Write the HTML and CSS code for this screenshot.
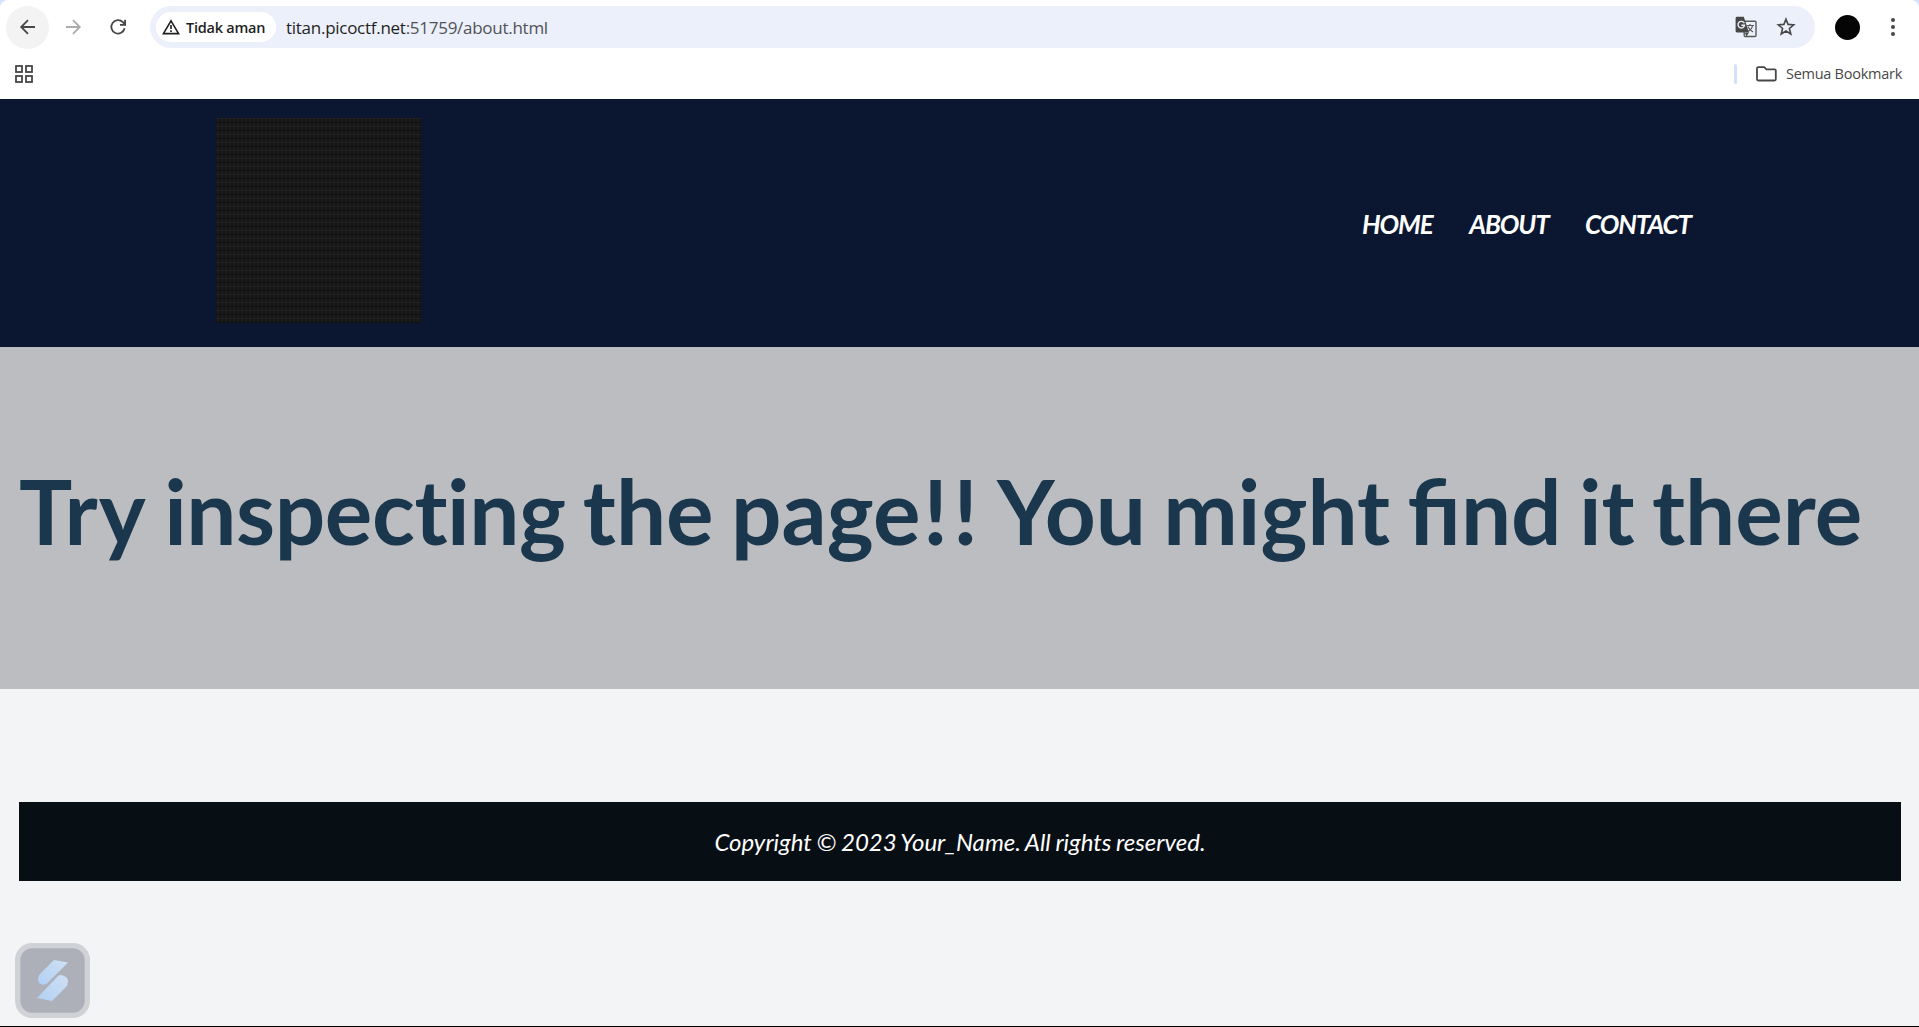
FILE: index.html
```html
<!DOCTYPE html>
<html lang="id">
<head>
<meta charset="utf-8">
<title>About</title>
<link rel="stylesheet" href="styles.css">
</head>
<body>
<div class="chrome">
  <div class="toolbar">
    <span class="nav-btn back"><svg width="20" height="20" viewBox="0 0 20 20"><path d="M17 10H3.6M10 3.2L3.2 10l6.8 6.8" fill="none" stroke="#474747" stroke-width="1.8"/></svg></span>
    <span class="nav-btn"><svg width="20" height="20" viewBox="0 0 20 20"><path d="M3 10h13.4M10 3.2l6.8 6.8-6.8 6.8" fill="none" stroke="#ababab" stroke-width="1.8"/></svg></span>
    <span class="nav-btn"><svg width="20" height="20" viewBox="0 0 20 20"><path d="M16.6 11.3A6.7 6.7 0 1 1 14.9 5.2L16.8 7.2M17.1 2.8v5h-5.1" fill="none" stroke="#474747" stroke-width="1.8"/></svg></span>
    <div class="omnibox">
      <span class="chip"><svg width="18" height="16" viewBox="0 0 18 16"><path d="M9 1.8L16.6 14.6H1.4z" fill="none" stroke="#1f1f1f" stroke-width="1.6"/><path d="M9 6v4M9 11.2v1.7" stroke="#1f1f1f" stroke-width="1.6"/></svg><span class="chip-label">Tidak aman</span></span>
      <span class="url">titan.picoctf.net<span class="path">:51759/about.html</span></span>
      <svg class="translate" width="22" height="22" viewBox="0 0 22 22"><rect x="9.2" y="5.3" width="11.8" height="15.2" rx="1" fill="none" stroke="#5a5a5a" stroke-width="1.4"/><path d="M2 .8h6.8L14 16.4H2A1.4 1.4 0 0 1 .6 15V2.2A1.4 1.4 0 0 1 2 .8z" fill="#474747"/><path d="M9.3 7.2A3.3 3.3 0 1 0 9.6 9.2H6.4" fill="none" stroke="#ecf0fa" stroke-width="1.4"/><path d="M11.5 9.500h7.500M15 8v1.500M17.500 9.500c-.5 3-2.500 5-4.500 6M13 10.500c1 2.500 3 4.500 5 5.500" fill="none" stroke="#5a5a5a" stroke-width="1.2"/><path d="M10 17l1.500 3.500 2.500-4z" fill="#474747"/></svg>
      <svg class="star" width="20" height="20" viewBox="0 0 20 20"><path d="M10 2.200l2.100 5.200 5.600.4-4.300 3.700 1.400 5.500L10 14l-4.800 3 1.400-5.500-4.300-3.700 5.600-.4z" fill="none" stroke="#474747" stroke-width="1.6"/></svg>
    </div>
    <span class="avatar"></span>
    <svg class="dots" width="6" height="20" viewBox="0 0 6 20" fill="#474747"><circle cx="3" cy="3" r="2"/><circle cx="3" cy="10" r="2"/><circle cx="3" cy="17" r="2"/></svg>
  </div>
  <div class="bookmarks">
    <svg width="18" height="18" viewBox="0 0 18 18" fill="none" stroke="#474747" stroke-width="1.8"><rect x="1" y="1" width="6" height="6"/><rect x="11" y="1" width="6" height="6"/><rect x="1" y="11" width="6" height="6"/><rect x="11" y="11" width="6" height="6"/></svg>
    <span class="divider"></span>
    <svg class="folder" width="21" height="16" viewBox="0 0 21 16"><path d="M1 2.500V13.300a1.200 1.200 0 0 0 1.200 1.200H18.600a1.200 1.200 0 0 0 1.200-1.200V4.500a1.200 1.200 0 0 0-1.200-1.200H10.400L8.200 1.200H2.200A1.200 1.200 0 0 0 1 2.500z" fill="none" stroke="#474747" stroke-width="1.8"/></svg>
    <span class="all">Semua Bookmark</span>
  </div>
</div>
<header class="header">
  <div class="logo"></div>
  <nav class="menu"><a>HOME</a><a>ABOUT</a><a>CONTACT</a></nav>
</header>
<main class="hero"><h1><span class="wide">Try</span> <span class="plain">inspecting</span> the page<span class="bang">!!</span> You might find it there</h1></main>
<footer class="footer"><p>Copyright © 2023 Your_Name. All rights reserved.</p></footer>
<div class="widget">
  <svg width="75" height="75" viewBox="0 0 75 75">
    <defs><linearGradient id="a" x1="1" y1="0" x2="0" y2="1"><stop offset="0" stop-color="#cfe0f3"/><stop offset="1" stop-color="#b1d0f4"/></linearGradient></defs>
    <rect width="75" height="75" rx="17" fill="#d1d2d5"/><rect x="5.3" y="5.3" width="64.4" height="64.4" rx="12" fill="#adb0b8"/>
    <path d="M39 17L53 19.500 32 40.500Q30 42 27 41.500 23 40.500 23 36 23 33 25 31z" fill="url(#a)"/>
    <path d="M37 58L22 55 43 33Q45 31.500 48 32.500 53 34 53 38 53 42 51 44z" fill="url(#a)"/>
  </svg>
</div>
</body>
</html>
```
FILE: styles.css
```css
* { box-sizing: border-box; }
body {
  margin: 0;
  height: 1027px;
  overflow: hidden;
  position: relative;
  display: flex;
  flex-direction: column;
  background: #f3f4f6;
  border-bottom: 1px solid #000;
  font-family: Lato, sans-serif;
}
.chrome {
  height: 99px;
  flex: none;
  background: #d3e3fd;
  font-family: "Open Sans", "Noto Sans", sans-serif;
}
.toolbar {
  display: flex;
  align-items: center;
  height: 54px;
  padding: 0 23px 0 6px;
  border-radius: 8px 8px 0 0;
  background: #fff;
}
.nav-btn { width: 43px; height: 43px; margin-right: 2px; border-radius: 50%; display: grid; place-items: center; }
.back { background: #f3f3f3; }
.omnibox {
  flex: 1;
  display: flex;
  align-items: center;
  height: 42px;
  margin-left: 9px;
  padding: 0 19px 0 6px;
  border-radius: 21px;
  background: #ecf0fa;
}
.chip { display: flex; align-items: center; width: 120px; height: 30px; padding-left: 6px; border-radius: 15px; background: #fff; }
.chip-label { margin-left: 6px; font-size: 14.5px; font-weight: 600; letter-spacing: -.25px; color: #1f1f1f; white-space: nowrap; }
.url { margin-left: 10px; font-size: 17px; color: #1f1f1f; white-space: nowrap; letter-spacing: -.27px; }
.path { color: #505256; }
.translate { margin-left: auto; margin-right: 19px; }
.avatar { width: 25px; height: 25px; margin: 0 30px 0 20px; border-radius: 50%; background: #050505; }
.bookmarks { display: flex; align-items: center; height: 45px; padding: 0 17px 6px 15px; background: #fff; }
.divider { width: 3px; height: 20px; margin-left: auto; border-radius: 2px; background: #d2e2fd; }
.folder { margin: 0 9px 0 19px; }
.all { font-size: 14.5px; letter-spacing: -.26px; color: #474747; white-space: nowrap; }
.header {
  flex: none;
  display: flex;
  align-items: center;
  justify-content: space-between;
  height: 248px;
  padding: 0 228px 5px 216px;
  background: #0b1631;
}
.logo {
  width: 205px;
  height: 205px;
  background:
    repeating-linear-gradient(0deg, rgba(0, 0, 0, .3) 0 1px, transparent 1px 4px, rgba(255, 255, 255, .035) 4px 5px, transparent 5px 8px),
    repeating-linear-gradient(90deg, rgba(0, 0, 0, .1) 0 1px, rgba(255, 255, 255, .015) 1px 3px, transparent 3px 4px),
    #171717;
}
.menu { display: flex; gap: 36.5px; padding-top: 7px; color: #fff; font-size: 26px; font-weight: 700; font-style: italic; letter-spacing: -1.1px; }
.hero { flex: none; height: 342px; padding: 0 19px; display: flex; align-items: center; background: #bcbdc1; }
h1 { margin: 0 0 14px; color: #1a374d; font-size: 89px; line-height: 1.2; font-weight: 700; white-space: nowrap; word-spacing: -4.3px; }
.wide { letter-spacing: 1.1px; }
.plain { font-variant-ligatures: none; letter-spacing: -.45px; }
.bang { margin-left: 2.5px; letter-spacing: 5.2px; }
.footer { flex: none; height: 79px; margin: 113px 18px 0 19px; display: grid; place-items: center; background: #070e14; }
.footer p { margin: 0; color: #fff; font-size: 24px; font-style: italic; white-space: nowrap; word-spacing: -1px; }
.widget { position: absolute; left: 15px; top: 943px; height: 75px; }
```
